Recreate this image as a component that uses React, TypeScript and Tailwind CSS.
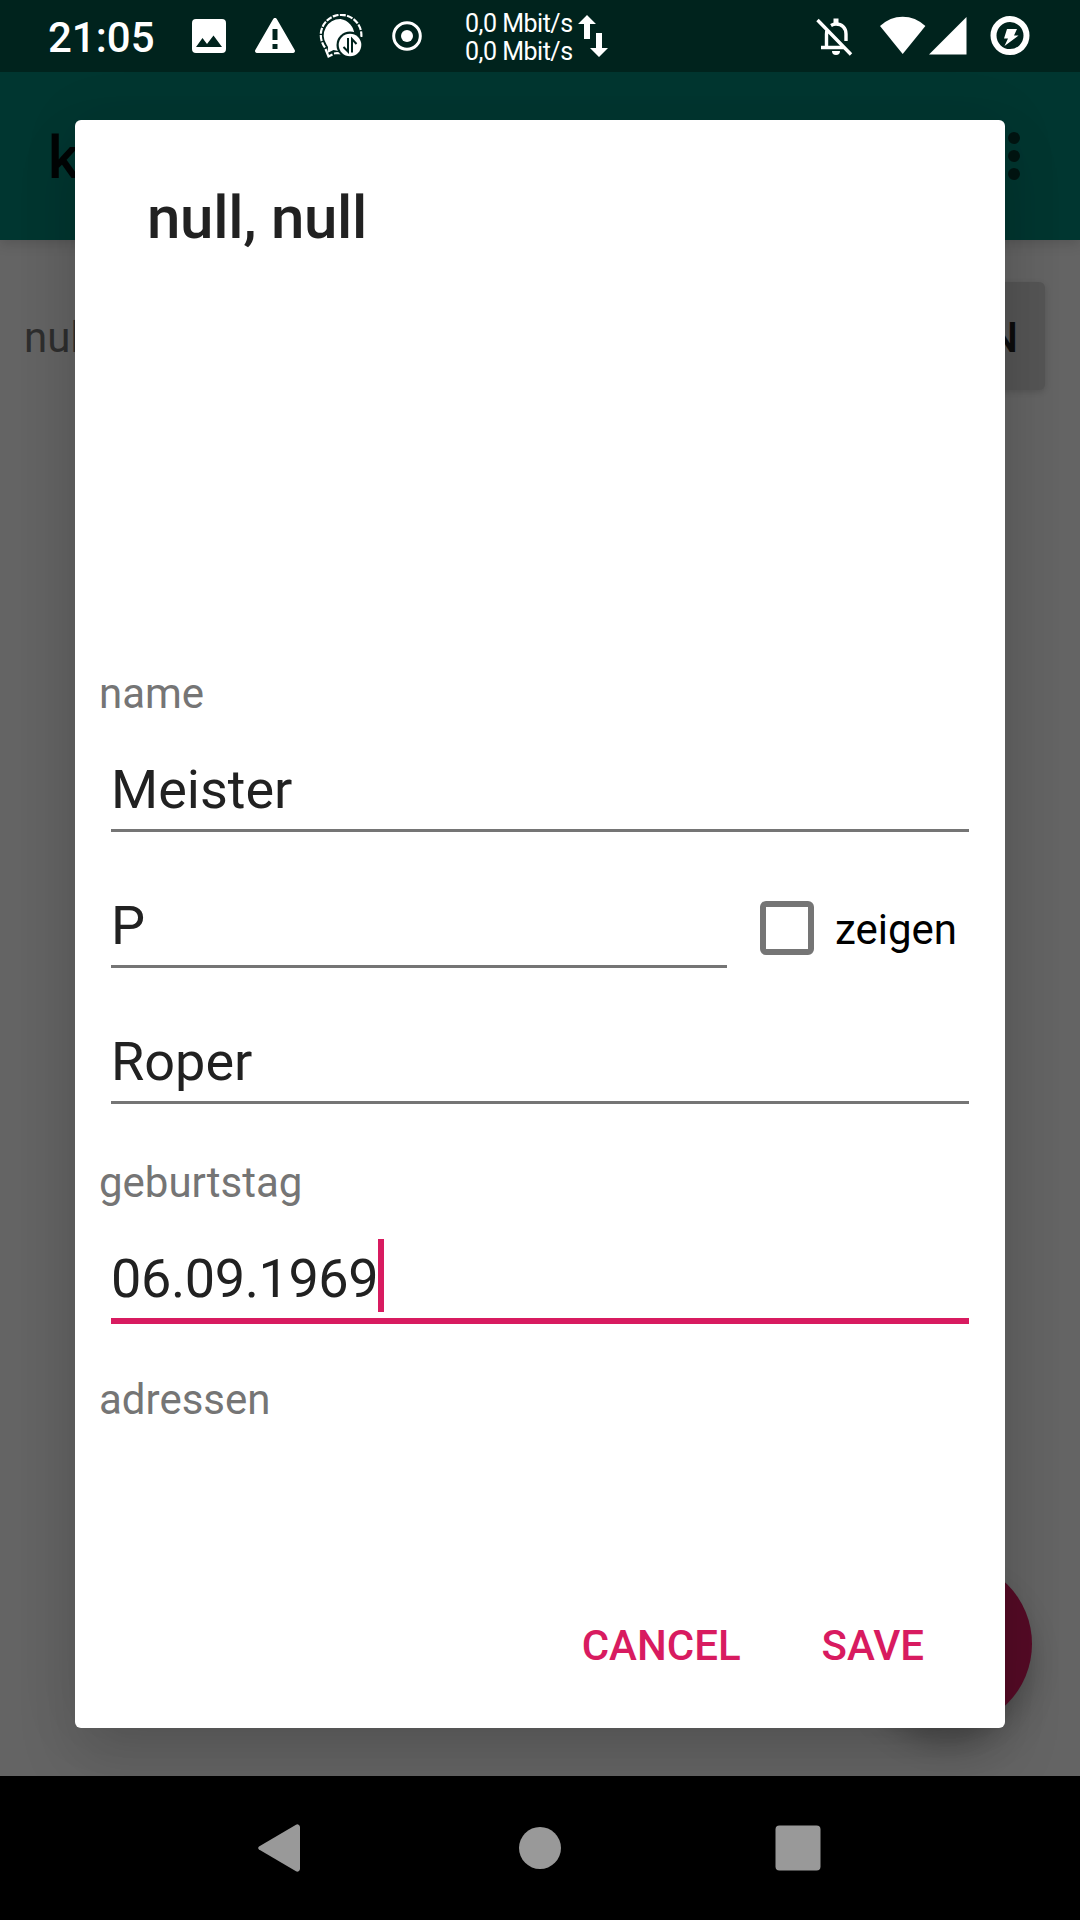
import React from "react";

function StatusBar() {
  return (
    <header className="z-10 flex h-[72px] shrink-0 items-start bg-[#00231d] text-white">
      <div className="ml-[48px] mt-[12px] w-[120px] text-[42px] font-medium leading-[52px]">21:05</div>
      <svg className="ml-[24px] mt-[19px] h-[34px] w-[34px] shrink-0" viewBox="0 0 34 34" fill="white">
        <path fillRule="evenodd" d="M4 0h26a4 4 0 0 1 4 4v26a4 4 0 0 1-4 4H4a4 4 0 0 1-4-4V4a4 4 0 0 1 4-4ZM4 28h26l-8.500-11.500-6.500 8.500-4.500-6Z" />
      </svg>
      <svg className="ml-[29px] mt-[18px] h-[35px] w-[40px] shrink-0" viewBox="0 0 40 35" fill="white">
        <path fillRule="evenodd" d="M18.200 1a2 2 0 0 1 3.600 0L39.700 32a2 2 0 0 1-1.700 3H2a2 2 0 0 1-1.700-3ZM17.500 11v11h5V11ZM17.500 26v5h5v-5Z" />
      </svg>
      <svg className="ml-[24px] mt-[14px] h-[45px] w-[44px] shrink-0" viewBox="0 0 44 45">
        <path d="M6 33.500A20.300 20.300 0 1 1 42.300 23" fill="none" stroke="white" strokeWidth="2.200" strokeDasharray="6 1.300" />
        <path d="M6.500 35l3 7.500 4-2M15 39.500l3-.5 4 .5" fill="none" stroke="white" strokeWidth="2.200" />
        <path d="M21.500 5a16.500 16.500 0 0 0-14 25.500l1.500 2.500-.5 6 6-3 7.500 1.500A16.500 16.500 0 0 0 21.500 5Z" fill="white" />
        <circle cx="31" cy="31" r="13.500" fill="#00231d" />
        <circle cx="31" cy="31" r="11.300" fill="white" />
        <path d="M24.500 33l4.500 4.500V24M33 38.500V25l4.500 5" fill="none" stroke="#00231d" strokeWidth="2" />
      </svg>
      <svg className="ml-[29px] mt-[21px] h-[30px] w-[30px] shrink-0" viewBox="0 0 30 30">
        <circle cx="15" cy="15" r="13.300" fill="none" stroke="white" strokeWidth="3" />
        <circle cx="15" cy="15" r="6" fill="white" />
      </svg>
      <div className="ml-[43px] mt-[10px] w-[114px] whitespace-nowrap text-[25px] leading-[28px] tracking-[-0.5px]">
        <p>0,0 Mbit/s</p>
        <p>0,0 Mbit/s</p>
      </div>
      <svg className="-ml-px mt-[15px] h-[42px] w-[30px] shrink-0" viewBox="0 0 30 42" fill="white">
        <path d="M9 0 18 9H12v15H6V9H0ZM18 18h6v15h6l-9 9-9-9h6Z" />
      </svg>
      <svg className="ml-[208px] mt-[18px] h-[38px] w-[37px] shrink-0" viewBox="0 0 37 38" fill="none" stroke="white" strokeWidth="3.400">
        <path d="M10.500 30V16q0-2.500 1-5M15 7.500q2.500-1.500 5-1.500c6 0 10 4 10 10V23M5 29.500h24M1.500 2l33.500 34.500" />
        <path d="M20 .5v5" strokeWidth="5" />
        <path d="M16 33h8a4 4 0 0 1-8 0Z" fill="white" stroke="none" />
      </svg>
      <svg className="ml-[27px] mt-[16px] h-[38px] w-[46px] shrink-0" viewBox="0 0 46 38" fill="white">
        <path d="M0 10Q10 .7 22.700.7T45.400 10L22.700 38Z" />
      </svg>
      <svg className="ml-[3px] mt-[17px] h-[38px] w-[38px] shrink-0" viewBox="0 0 38 38" fill="white">
        <path d="M37.500 0v37.500H0Z" />
      </svg>
      <svg className="ml-[23px] mt-[16px] h-[40px] w-[40px] shrink-0" viewBox="0 0 40 40" fill="white">
        <circle cx="20" cy="19.600" r="16.500" fill="none" stroke="white" strokeWidth="6" />
        <path d="M17 13h10l-3 6.500h4.500L14.500 30l3.500-7.500h-4Z" />
      </svg>
    </header>
  );
}

function Field({ value, focused = false }: { value: string; focused?: boolean }) {
  return (
    <div
      className={
        focused
          ? "mx-3 flex h-[85px] flex-1 items-start border-b-[6px] border-[#d81b60] tracking-[-0.4px]"
          : "mx-3 flex h-[82px] flex-1 items-start border-b-[3px] border-[#757575]"
      }
    >
      <span className="text-[54px] leading-[80px] text-[#212121]">{value}</span>
      {focused && <span className="h-[73px] w-[6px] bg-[#d81b60]" />}
    </div>
  );
}

function Dialog() {
  return (
    <section className="absolute left-[75px] top-[120px] flex h-[1608px] w-[930px] flex-col rounded-[6px] bg-white shadow-[0_30px_60px_rgba(0,0,0,0.13),0_0_60px_rgba(0,0,0,0.08)]">
      <h2 className="ml-[72px] mt-[63px] text-[60px] font-medium leading-[70px] tracking-[-0.3px] text-[#212121]">null, null</h2>
      <div className="ml-[24px] mr-[24px] mt-[416px] flex flex-col text-[42px] text-[#757575]">
        <label className="h-[50px] leading-[50px]">name</label>
        <div className="mt-[31px] flex"><Field value="Meister" /></div>
        <div className="mt-[54px] flex">
          <div className="flex w-[640px]"><Field value="P" /></div>
          <div className="ml-[21px] mt-[15px] flex items-start">
            <span className="h-[54px] w-[54px] rounded-[6px] border-[6px] border-[#757575]" />
            <span className="ml-[21px] mt-[4px] leading-[50px] text-black">zeigen</span>
          </div>
        </div>
        <div className="mt-[54px] flex"><Field value="Roper" /></div>
        <label className="mt-[54px] h-[50px] leading-[50px]">geburtstag</label>
        <div className="mt-[31px] flex"><Field value="06.09.1969" focused /></div>
        <label className="mt-[51px] h-[50px] leading-[50px]">adressen</label>
      </div>
      <div className="mb-[57px] mr-[81px] mt-auto flex justify-end gap-[81px] text-[42px] font-medium leading-[50px] text-[#d81b60]">
        <button>CANCEL</button>
        <button>SAVE</button>
      </div>
    </section>
  );
}

export default function App() {
  return (
    <div className="relative flex h-[1920px] w-[1080px] flex-col overflow-hidden bg-[#646464] font-['Roboto',sans-serif]">
      <StatusBar />
      <div className="flex flex-1 flex-col">
        <div className="flex h-[168px] items-center justify-between bg-[#003630] pl-[48px] pr-[60px] shadow-[0_4px_12px_rgba(0,0,0,0.15)]">
          <h1 className="mt-[4px] text-[60px] font-medium leading-[70px] text-[#000505]">kontakte</h1>
          <div className="flex flex-col gap-[6px]">
            <span className="h-3 w-3 rounded-full bg-[#001512]" />
            <span className="h-3 w-3 rounded-full bg-[#001512]" />
            <span className="h-3 w-3 rounded-full bg-[#001512]" />
          </div>
        </div>
        <div className="flex items-start justify-between pl-[24px] pr-[35px] pt-[42px]">
          <span className="mt-[31px] text-[42px] leading-[50px] text-[#2e2e2e]">null, null</span>
          <button className="h-[108px] rounded-[6px] bg-[#555555] px-[27px] pt-[2px] text-[42px] font-medium text-[#0d0d0d] shadow-[0_2px_6px_rgba(0,0,0,0.15)]">ÖFFNEN</button>
        </div>
        <div className="mb-[48px] mr-[48px] mt-auto h-[168px] w-[168px] self-end rounded-full bg-[#550b26] shadow-[0_18px_30px_-4px_rgba(0,0,0,0.28)]" />
      </div>
      <nav className="h-[144px] bg-black">
        <svg className="h-[144px] w-[1080px]" viewBox="0 0 1080 144" fill="#999999">
          <path d="M259 70.500 296 48.700a2.700 2.700 0 0 1 4 2.300v42a2.700 2.700 0 0 1-4 2.300L259 73.500a1.800 1.800 0 0 1 0-3Z" />
          <circle cx="540" cy="72" r="21" />
          <rect x="775.500" y="49.500" width="45" height="45" rx="4" />
        </svg>
      </nav>
      <Dialog />
    </div>
  );
}
